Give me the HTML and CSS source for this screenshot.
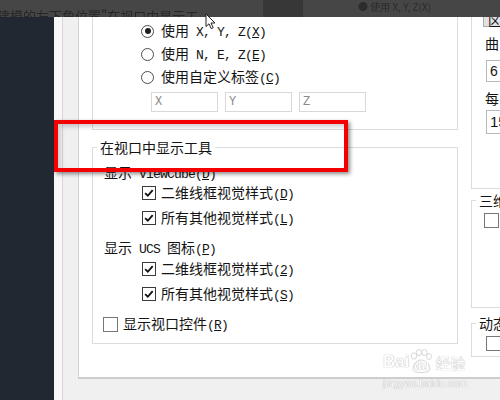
FILE: index.html
```html
<!DOCTYPE html>
<html lang="zh-CN">
<head>
<meta charset="utf-8">
<link rel="stylesheet" href="styles.css">
</head>
<body>
<div class="top">
  <div class="top-l">建模的左下角位置"在视口中显示工</div>
  <div class="top-dark"></div>
  <div class="top-r">● 使用 X, Y, Z(X)</div>
</div>
<div class="main">
  <div class="side"></div>
  <div class="edge"></div>
  <div class="dlg">
    <div class="page">
      <div class="lcol">
        <div class="grp1">
          <div class="row rr"><span class="radio on"></span><span class="t">使用<span class="m"> X, Y, Z(<u>X</u>)</span></span></div>
          <div class="row rr mt1"><span class="radio"></span><span class="t">使用<span class="m"> N, E, Z(<u>E</u>)</span></span></div>
          <div class="row rr mt1"><span class="radio"></span><span class="t">使用自定义标签<span class="m">(<u>C</u>)</span></span></div>
          <div class="inputs">
            <div class="inp">X</div>
            <div class="inp">Y</div>
            <div class="inp">Z</div>
          </div>
        </div>
        <div class="grp grp2">
          <div class="legend">在视口中显示工具</div>
          <div class="row head mt6"><span class="t">显示<span class="m"> ViewCube(<u>D</u>)</span></span></div>
          <div class="row cb"><span class="box"><svg viewBox="0 0 14 14" width="12" height="12"><path d="M2.5 7.2 L5.6 10.2 L11.3 3.6" fill="none" stroke="#111" stroke-width="2.2"/></svg></span><span class="t">二维线框视觉样式<span class="m">(<u>D</u>)</span></span></div>
          <div class="row cb mt5"><span class="box"><svg viewBox="0 0 14 14" width="12" height="12"><path d="M2.5 7.2 L5.6 10.2 L11.3 3.6" fill="none" stroke="#111" stroke-width="2.2"/></svg></span><span class="t">所有其他视觉样式<span class="m">(<u>L</u>)</span></span></div>
          <div class="row head mt10"><span class="t">显示<span class="m"> UCS </span>图标<span class="m">(<u>P</u>)</span></span></div>
          <div class="row cb mt1"><span class="box"><svg viewBox="0 0 14 14" width="12" height="12"><path d="M2.5 7.2 L5.6 10.2 L11.3 3.6" fill="none" stroke="#111" stroke-width="2.2"/></svg></span><span class="t">二维线框视觉样式<span class="m">(<u>2</u>)</span></span></div>
          <div class="row cb mt5"><span class="box"><svg viewBox="0 0 14 14" width="12" height="12"><path d="M2.5 7.2 L5.6 10.2 L11.3 3.6" fill="none" stroke="#111" stroke-width="2.2"/></svg></span><span class="t">所有其他视觉样式<span class="m">(<u>S</u>)</span></span></div>
          <div class="row vc mt10"><span class="box empty"></span><span class="t">显示视口控件<span class="m">(<u>R</u>)</span></span></div>
        </div>
      </div>
      <div class="rcol">
        <div class="rbox1">
          <div class="btn">区</div>
          <div class="rlab">曲</div>
          <div class="rinp">6</div>
          <div class="rlab mt2">每</div>
          <div class="rinp tall">15</div>
        </div>
        <div class="grp g3">
          <div class="legend">三维</div>
          <span class="box empty g3box"></span>
        </div>
        <div class="grp g4">
          <div class="legend">动态</div>
          <span class="box empty g4box"></span>
        </div>
      </div>
    </div>
  </div>
</div>
<div class="redbox"></div>
<svg class="cursor" viewBox="0 0 12 17" width="12" height="17"><path d="M1 1 L1 13.5 L4 10.8 L6.2 15.6 L8.2 14.7 L6 10 L10 10 Z" fill="#fff" stroke="#222" stroke-width="1" stroke-linejoin="round"/></svg>
<div class="wm">
  <div class="wm1">
    <span class="bai">Bai</span>
    <span class="paw">
      <svg viewBox="0 0 22 24" width="22" height="24"><g fill="#fff" stroke="#c8c8c8" stroke-width="0.8"><ellipse cx="4" cy="7" rx="2.6" ry="3.2"/><ellipse cx="9" cy="3.5" rx="2.6" ry="3.2"/><ellipse cx="14.5" cy="3.5" rx="2.6" ry="3.2"/><ellipse cx="19" cy="7.5" rx="2.5" ry="3"/><path d="M3 20 C3 15 7 11 11 11 C15 11 20 15 20 20 C20 23 16 23.5 11 23.5 C6 23.5 3 23 3 20 Z"/></g></svg>
      <span class="du">du</span>
    </span>
    <span class="jy">经验</span>
  </div>
  <div class="wm2">jingyan.baidu.com</div>
</div>
</body>
</html>
```
FILE: styles.css
```css
html, body {
  margin: 0;
  padding: 0;
}
body {
  width: 500px;
  height: 400px;
  overflow: hidden;
  position: relative;
  background: #f0f0f0;
  font-family: "Noto Sans CJK SC", "Liberation Sans", sans-serif;
  font-size: 14px;
  color: #141414;
}
.m {
  font-family: "Liberation Mono", "Noto Sans CJK SC", monospace;
  font-size: 13px;
  letter-spacing: -0.8px;
}
u {
  text-decoration: underline;
  text-underline-offset: 1px;
  text-decoration-thickness: 1px;
}

/* top blurred strip */
.top {
  height: 17px;
  background: #464646;
  display: flex;
  overflow: hidden;
}
.top-l {
  width: 266px;
  margin-left: -3px;
  flex: none;
  font-size: 13px;
  line-height: 14px;
  padding-top: 9px;
  color: #262626;
  white-space: nowrap;
  filter: blur(0.5px);
}
.top-dark {
  width: 40px;
  flex: none;
  background: #373737;
}
.top-r {
  margin-left: 55px;
  font-size: 10px;
  line-height: 12px;
  padding-top: 1px;
  color: #2c2c2c;
  white-space: nowrap;
  filter: blur(0.6px);
}

/* main area */
.main {
  display: flex;
  height: 383px;
}
.side {
  width: 54px;
  flex: none;
  background: #222831;
}
.edge {
  width: 8px;
  flex: none;
  background: #f8f8f8;
  border-right: 1px solid #d6d6d6;
}
.dlg {
  flex: 1;
  background: #f0f0f0;
  padding-left: 15px;
  min-width: 0;
}
.page {
  height: 360px;
  background: #fff;
  border-left: 1px solid #d2d2d2;
  border-bottom: 2px solid #cdcdcd;
  display: flex;
  overflow: hidden;
}
.lcol {
  width: 366px;
  flex: none;
  margin-left: 13px;
}
.grp1 {
  box-sizing: border-box;
  height: 113px;
  border: 1px solid #dcdcdc;
  border-top: none;
  padding-top: 3px;
}
.row {
  display: flex;
  align-items: center;
  height: 20px;
  line-height: 20px;
  white-space: nowrap;
}
.t {
  white-space: nowrap;
}
.rr {
  height: 22px;
  padding-left: 48px;
}
.mt1 { margin-top: 1px; }
.mt2 { margin-top: 2px; }
.mt5 { margin-top: 5px; }
.mt6 { margin-top: 6px; }
.mt10 { margin-top: 10px; }

.radio {
  width: 13px;
  height: 13px;
  box-sizing: border-box;
  border: 1px solid #4c4c4c;
  border-radius: 50%;
  background: #fff;
  margin-right: 7px;
  display: flex;
  align-items: center;
  justify-content: center;
  flex: none;
}
.radio.on::after {
  content: "";
  width: 6px;
  height: 6px;
  border-radius: 50%;
  background: #1e1e1e;
}
.inputs {
  display: flex;
  gap: 7px;
  margin-top: 4px;
  padding-left: 58px;
}
.inp {
  width: 67px;
  height: 20px;
  box-sizing: border-box;
  border: 1px solid #d8d8d8;
  font-family: "Liberation Mono", monospace;
  font-size: 12px;
  line-height: 18px;
  color: #8a8a8a;
  padding-left: 3px;
}

.grp {
  box-sizing: border-box;
  border: 1px solid #dcdcdc;
}
.legend {
  width: fit-content;
  height: 20px;
  line-height: 20px;
  margin: -11px 0 0 4px;
  padding: 0 3px;
  background: #fff;
  white-space: nowrap;
}
.grp2 {
  margin-top: 17px;
  height: 197px;
}
.head {
  padding-left: 11px;
}
.cb {
  padding-left: 49px;
}
.vc {
  padding-left: 10px;
}
.box {
  width: 14px;
  height: 14px;
  box-sizing: border-box;
  border: 1px solid #3a3a3a;
  background: #fff;
  margin-right: 5px;
  flex: none;
  display: flex;
  align-items: center;
  justify-content: center;
}
.box.empty {
  width: 15px;
  height: 15px;
  border-color: #777;
}

/* right column */
.rcol {
  flex: none;
  width: 60px;
  margin-left: 13px;
}
.rbox1 {
  box-sizing: border-box;
  height: 182px;
  border-left: 1px solid #dcdcdc;
  border-bottom: 1px solid #dcdcdc;
  padding-left: 11px;
}
.btn {
  margin-top: -10px;
  height: 20px;
  width: 44px;
  box-sizing: border-box;
  border: 1px solid #adadad;
  background: #e1e1e1;
  font-size: 13px;
  line-height: 24px;
  padding-left: 4px;
}
.rlab {
  margin: 6px 0 0 2px;
  height: 20px;
  line-height: 20px;
}
.rinp {
  margin: 7px 0 0 3px;
  height: 22px;
  box-sizing: border-box;
  border: 1px solid #b9b9b9;
  font-size: 14px;
  line-height: 20px;
  padding-left: 3px;
  font-family: "Liberation Sans", sans-serif;
}
.rinp.tall {
  margin-top: 2px;
  height: 24px;
  line-height: 22px;
  font-size: 15px;
}
.g3 {
  margin-top: 11px;
  height: 108px;
  border-right: none;
}
.g3box {
  margin: 3px 0 0 12px;
}
.g4 {
  margin-top: 15px;
  height: 34px;
  border-right: none;
}
.g4box {
  margin: 3px 0 0 14px;
}

/* overlays */
.redbox {
  position: absolute;
  left: 54px;
  top: 120px;
  width: 294px;
  height: 52px;
  box-sizing: border-box;
  border: 4px solid #f40000;
  box-shadow: 2px 2px 4px rgba(0, 0, 0, 0.45), inset 3px 3px 4px rgba(0, 0, 0, 0.18);
}
.cursor {
  position: absolute;
  left: 205px;
  top: 13px;
}
.wm {
  position: absolute;
  left: 383px;
  top: 340px;
  width: 90px;
  color: #fff;
  opacity: 0.9;
}
.wm1 {
  display: flex;
  align-items: flex-end;
  height: 32px;
}
.bai, .du, .jy, .wm2 {
  font-family: "Liberation Sans", sans-serif;
  text-shadow: 0 0 1px #9a9a9a, 0 0 1px #bdbdbd;
}
.bai {
  font-size: 17px;
  font-weight: bold;
  line-height: 17px;
  margin-bottom: 2px;
}
.paw {
  display: flex;
  flex-direction: column;
  align-items: center;
  width: 22px;
  margin-left: 1px;
}
.paw svg {
  display: block;
}
.du {
  font-size: 12px;
  font-weight: bold;
  line-height: 12px;
  margin-top: -13px;
  color: #fff;
}
.jy {
  font-family: "Noto Sans CJK SC", sans-serif;
  font-size: 15px;
  line-height: 17px;
  margin-left: 3px;
  margin-bottom: 1px;
  text-shadow: 0 0 1px #9a9a9a, 0 0 1px #bdbdbd;
}
.wm2 {
  font-size: 10.5px;
  line-height: 12px;
  margin-top: 5px;
  white-space: nowrap;
}
```
